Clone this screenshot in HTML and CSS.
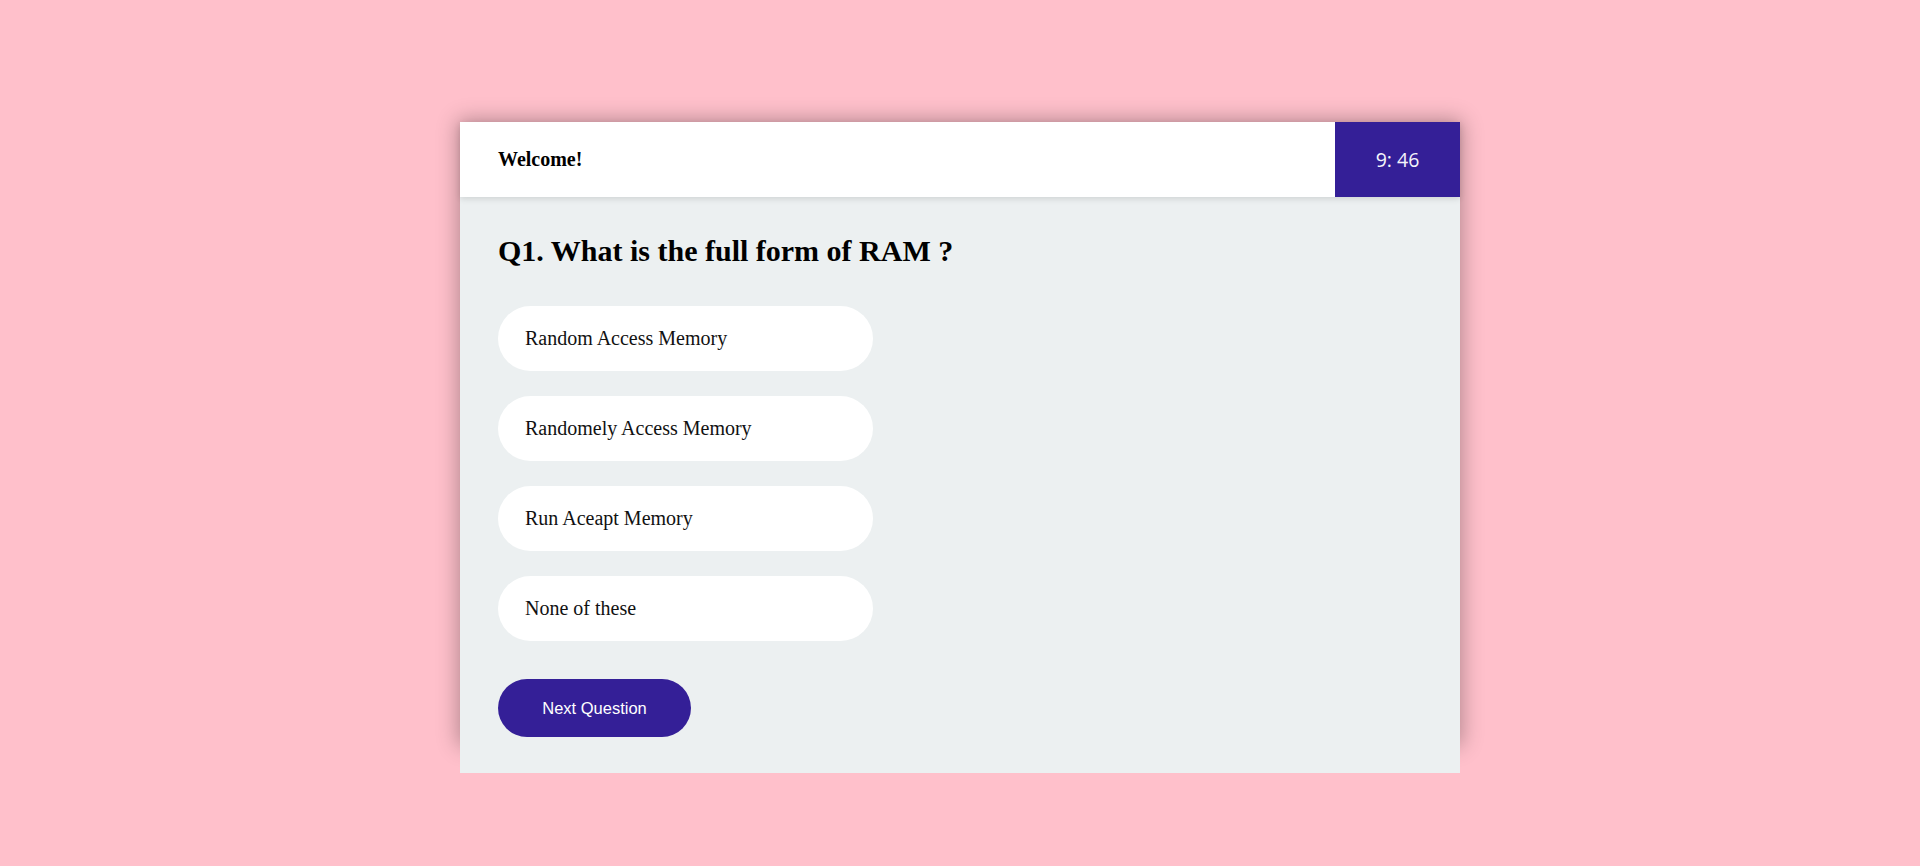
FILE: index.html
```html
<!DOCTYPE html>
<html lang="en">
<head>
<meta charset="utf-8">
<title>Quiz</title>
<link rel="stylesheet" href="styles.css">
</head>
<body>
<div class="quiz-container">
  <header class="quiz-header">
    <div class="welcome">Welcome!</div>
    <div class="timer">9: 46</div>
  </header>
  <main class="quiz-body">
    <h2 class="question">Q1. What is the full form of RAM ?</h2>
    <ul class="options">
      <li class="option">Random Access Memory</li>
      <li class="option">Randomely Access Memory</li>
      <li class="option">Run Aceapt Memory</li>
      <li class="option">None of these</li>
    </ul>
    <button class="next-btn">Next Question</button>
  </main>
</div>
</body>
</html>
```
FILE: styles.css
```css
html, body {
  margin: 0;
  padding: 0;
}
body {
  background: #ffc0cb;
  height: 100vh;
  display: flex;
  align-items: center;
  justify-content: center;
  font-family: "Liberation Serif", "Times New Roman", serif;
}
.quiz-container {
  width: 1000px;
  height: 622px;
  box-shadow: 0 0 20px 2px rgba(0, 0, 0, 0.3);
  display: flex;
  flex-direction: column;
}
.quiz-header {
  position: relative;
  z-index: 1;
  height: 75px;
  background: #fff;
  display: flex;
  align-items: stretch;
  justify-content: space-between;
  box-shadow: 0 2px 6px rgba(0, 0, 0, 0.12);
  flex-shrink: 0;
}
.welcome {
  display: flex;
  align-items: center;
  padding-left: 38px;
  font-weight: bold;
  font-size: 20px;
  color: #000;
}
.timer {
  width: 125px;
  background: #341f97;
  color: #f4f4fb;
  font-family: "Open Sans", sans-serif;
  font-size: 19.5px;
  display: flex;
  align-items: center;
  justify-content: center;
}
.quiz-body {
  background: #ecf0f1;
  padding: 37px 38px 36px 38px;
  flex-shrink: 0;
}
.question {
  margin: 0 0 39px 0;
  font-size: 30px;
  font-weight: bold;
  color: #000;
  line-height: 33px;
}
.options {
  list-style: none;
  margin: 0;
  padding: 0;
  display: flex;
  flex-direction: column;
  gap: 25px;
}
.option {
  width: 375px;
  height: 65px;
  box-sizing: border-box;
  padding: 0 27px;
  background: #fff;
  border-radius: 33px;
  display: flex;
  align-items: center;
  font-size: 20px;
  color: #111;
}
.next-btn {
  margin-top: 38px;
  width: 193px;
  height: 58px;
  border: none;
  border-radius: 29px;
  background: #341f97;
  color: #fff;
  font-family: "Liberation Sans", Arial, sans-serif;
  font-size: 16.5px;
  display: block;
  padding: 0;
}
```
